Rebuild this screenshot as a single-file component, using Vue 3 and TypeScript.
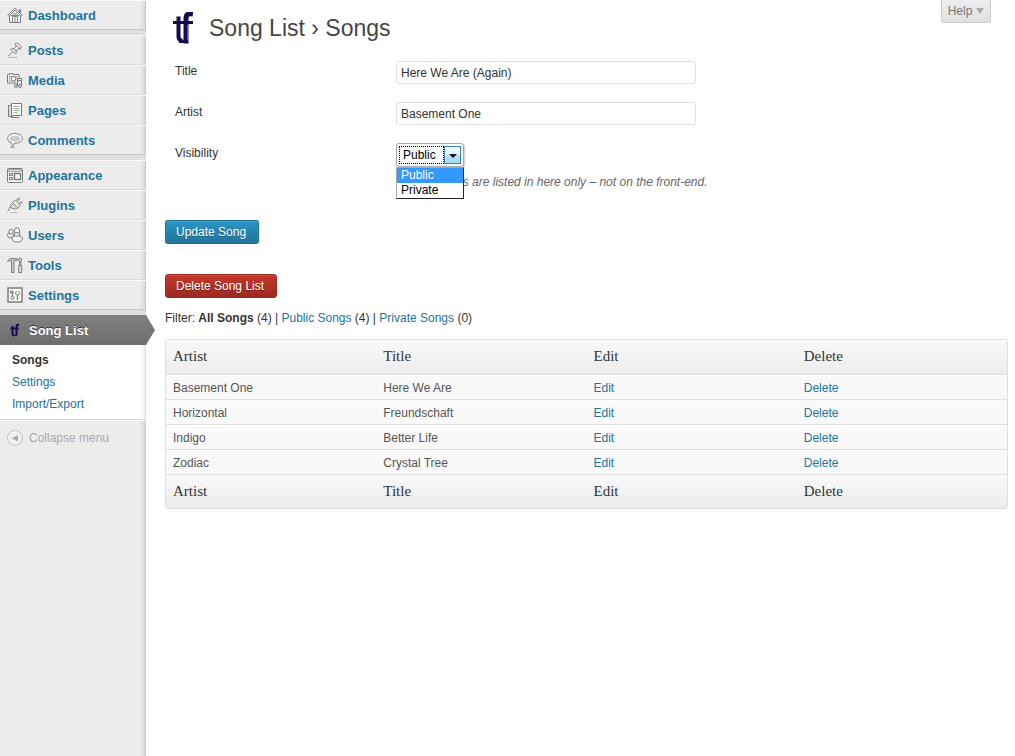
<script setup lang="ts">
import { ref } from 'vue'

interface MenuItem { name: string; icon: string }
interface Song { artist: string; title: string }

const menuGroups: MenuItem[][] = [
  [{ name: 'Dashboard', icon: 'home' }],
  [
    { name: 'Posts', icon: 'pin' },
    { name: 'Media', icon: 'media' },
    { name: 'Pages', icon: 'pages' },
    { name: 'Comments', icon: 'comment' },
  ],
  [
    { name: 'Appearance', icon: 'appearance' },
    { name: 'Plugins', icon: 'plug' },
    { name: 'Users', icon: 'users' },
    { name: 'Tools', icon: 'tools' },
    { name: 'Settings', icon: 'settings' },
  ],
]

const columns: string[] = ['Artist', 'Title', 'Edit', 'Delete']
const songs: Song[] = [
  { artist: 'Basement One', title: 'Here We Are' },
  { artist: 'Horizontal', title: 'Freundschaft' },
  { artist: 'Indigo', title: 'Better Life' },
  { artist: 'Zodiac', title: 'Crystal Tree' },
]
const options: string[] = ['Public', 'Private']

const title = ref('Here We Are (Again)')
const artist = ref('Basement One')
const visibility = ref('Public')
const menuOpen = ref(true)

function choose(option: string): void {
  visibility.value = option
  menuOpen.value = false
}
</script>

<template>
  <div class="page">
    <nav class="sidebar">
      <ul v-for="(group, g) in menuGroups" :key="g" class="group">
        <li v-for="item in group" :key="item.name" class="item">
          <a href="#" class="item-link">
            <svg class="icon" viewBox="0 0 16 16" fill="none" stroke="#7c7c7c" stroke-width="1" aria-hidden="true">
              <g v-if="item.icon === 'home'">
                <path d="M2.500 8v7.500h11V8" fill="#f6f6f6" />
                <path d="M.8 8.200 8 1.200l7.200 7-1 1L8 3.200 1.800 9.200z" fill="#fff" />
                <path d="M12.500 5V2.500h1V6M5.500 15V9.500h5V15M8 10v5M4 8.500h8M6 7h4" stroke="#888" />
              </g>
              <g v-else-if="item.icon === 'pin'">
                <path d="M8.500 1.500c1-1 2.500-.3 4 1.200s2 3 1 4c-1 .6-1.700.3-2.300-.1L9 9c.4 1.500.2 2.300-.5 3L3.800 7.300c1-.8 2-.9 3.200-.4l2-2.300c-.7-1-1-2.200-.5-3.100z" fill="#f5f5f5" />
                <path d="M5.500 10 1 14.500M9.500 3c.8 1.800 1.800 2.900 3.500 3.500M7 7l2 2" />
                <path d="M2 15.500h9" stroke="#bbb" />
              </g>
              <g v-else-if="item.icon === 'media'">
                <path d="M.5 2.500h2v-1h3v1h6.500v8.500H.5z" fill="#f4f4f4" />
                <rect x="2.500" y="4.500" width="7.500" height="4.500" stroke="#aaa" />
                <circle cx="6.500" cy="6.700" r="2.300" fill="#fff" />
                <path d="M9.500 14V6.500h5V13" fill="#eee" stroke="none" />
                <path d="M10.500 14V6.500h4V13M10.500 8.500h4" />
                <circle cx="8.800" cy="14" r="1.500" fill="#ddd" /><circle cx="13" cy="14" r="1.500" fill="#ddd" />
              </g>
              <g v-else-if="item.icon === 'pages'">
                <path d="M1.500 3.500h4v11h-4zM4 15.500h8" fill="#ddd" />
                <path d="M4.500 1.500h10v12h-10z" fill="#f8f8f8" />
                <path d="M6.500 4.500h6M6.500 6.500h6M6.500 8.500h6M6.500 10.500h4" stroke="#aaa" />
              </g>
              <g v-else-if="item.icon === 'comment'">
                <path d="M4.500 10.800C2 10 .7 8.800.7 6.500c0-3 3.300-5 7.300-5s7.300 2 7.300 5-3.300 4.800-7.800 4.700c-.4 1.800-1 3-2.800 3.800.7-1.500.7-2.800-.2-4.200z" fill="#fbfbfb" />
                <path d="M2.700 7c0-2 2.300-3.300 5.300-3.300S13.300 5 13.300 7 11 9.500 8 9.500 2.700 9 2.700 7z" fill="#ccc" stroke="none" />
                <path d="M3 15.500h5" stroke="#aaa" />
              </g>
              <g v-else-if="item.icon === 'appearance'">
                <rect x=".5" y="1.500" width="15" height="14" rx="1" fill="#fafafa" />
                <path d="M1.500 2.500h13v2h-13z" fill="#ddd" stroke="#aaa" />
                <rect x="2.500" y="6.500" width="3" height="2" /><rect x="2.500" y="10.500" width="3" height="2" />
                <rect x="7.500" y="6.500" width="6" height="6" stroke-width="1.500" />
              </g>
              <g v-else-if="item.icon === 'plug'">
                <path d="M5.500 5.500C7 3 9 3.500 11 5.500s2.200 4 0 5.500c-2 1.200-4.500 1.500-6.500 0-1.500-1.700-.6-3.700 1-5.500z" fill="#f5f5f5" />
                <path d="M5.500 5.500 11 11M8.500 4l3.500-3 .8.800-3.300 3.200M11.500 7l3-2.500.8.800-3 2.700" fill="#fff" />
                <path d="M4.500 10c-2 .2-2.800 1-2.200 2.500L.5 14.500" />
                <path d="M6 7v3M8 9v2" stroke="#aaa" /><path d="M3 15.500h7" stroke="#bbb" />
              </g>
              <g v-else-if="item.icon === 'users'">
                <ellipse cx="3.500" cy="8.200" rx="3" ry="2.700" fill="#eee" />
                <ellipse cx="4" cy="4.700" rx="2" ry="2.500" fill="#fff" />
                <ellipse cx="10" cy="4" rx="2.600" ry="3.200" fill="#fff" />
                <ellipse cx="10" cy="8" rx="3" ry="2.500" fill="#eee" />
                <path d="M5 11.500C5 9.500 7 9 8.500 9h3.500c2 0 3.500 1.300 3.500 3s-2 3-5 3-5.500-1-5.500-3.500z" fill="#f7f7f7" />
              </g>
              <g v-else-if="item.icon === 'tools'">
                <path d="M.7 4.500C1.500 2.300 3 1.500 5 1.500h3.500v2H7v12H4.500v-12c-1.500-.3-2.500.2-3.800 1z" fill="#ccc" />
                <path d="M8.500 1.500h1.800v2H8.500" fill="#ddd" />
                <path d="M12.500 8V4l-.8-1 1-2h1l1 2-.8 1v4M11.700 8.500h3v7h-3z" fill="#ddd" />
              </g>
              <g v-else>
                <rect x="1" y="1" width="14" height="14" fill="#fafafa" stroke-width="1.500" />
                <path d="M5.500 3.500v6M3.500 3.500v2h3M10.500 8v5" stroke-width="1.300" />
                <circle cx="5.500" cy="11" r="1.500" /><circle cx="10.500" cy="6" r="2" /><path d="M10.500 3v2" stroke="#fafafa" stroke-width="1.500" />
              </g>
            </svg>
            <span>{{ item.name }}</span>
          </a>
        </li>
      </ul>

      <a href="#" class="current">
        <svg class="icon" viewBox="0 0 16 16" fill="none" stroke="#16094f" aria-hidden="true">
          <path d="M5.500 4v7.500q0 2 2 2M3.500 6.500h8M12 3q-2.500-1-2.500 1.500v9" stroke-width="2" />
          <path d="M7.500 13.500h2" />
        </svg>
        <span>Song List</span>
      </a>
      <ul class="submenu">
        <li><a href="#" class="selected">Songs</a></li>
        <li><a href="#">Settings</a></li>
        <li><a href="#">Import/Export</a></li>
      </ul>
      <button type="button" class="collapse">
        <svg class="icon" viewBox="0 0 16 16" aria-hidden="true">
          <circle cx="8" cy="8" r="7.500" fill="#f1f1f1" stroke="#c4c4c4" />
          <path d="M11 5v6.500L4.500 8.200z" fill="#aaa" />
        </svg>
        <span>Collapse menu</span>
      </button>
    </nav>

    <main class="content">
      <header class="heading">
        <svg class="logo" viewBox="0 0 20 32" fill="none" stroke="#16094f" aria-hidden="true">
          <path d="M5.500 4.500v20q0 4 4 4.500" stroke-width="4" />
          <path d="M0 10.500h20" stroke-width="3" />
          <path d="M20 2q-7-1.500-7 4.500v25" stroke-width="5" />
          <path d="M6 29.500h9" stroke-width="3" />
          <path d="M14.500 13v15" stroke="#5f5797" stroke-width="1" />
        </svg>
        <h1>Song List › Songs</h1>
        <button type="button" class="help">Help <span class="caret"></span></button>
      </header>

      <form @submit.prevent>
        <div class="fields">
          <label for="title">Title</label>
          <input id="title" v-model="title" type="text">
          <label for="artist">Artist</label>
          <input id="artist" v-model="artist" type="text">
          <label for="visibility">Visibility</label>
          <div class="visibility">
            <div class="picker">
              <select id="visibility" v-model="visibility">
                <option v-for="option in options" :key="option">{{ option }}</option>
              </select>
              <span class="focus-ring"></span>
              <span class="drop"></span>
              <ul v-if="menuOpen" class="options" role="listbox" aria-label="Visibility">
                <li
                  v-for="option in options"
                  :key="option"
                  role="option"
                  :aria-selected="option === visibility"
                  :class="{ active: option === visibility }"
                  @click="choose(option)"
                >{{ option }}</li>
              </ul>
            </div>
            <p class="hint">Private songs are listed in here only – not on the front-end.</p>
          </div>
        </div>
        <button type="submit" class="button">Update Song</button>
      </form>
      <button type="button" class="button danger">Delete Song List</button>

      <p class="filter">
        Filter: <strong>All Songs</strong> (4) | <a href="#">Public Songs</a> (4) | <a href="#">Private Songs</a> (0)
      </p>

      <table>
        <thead>
          <tr><th v-for="column in columns" :key="column" scope="col">{{ column }}</th></tr>
        </thead>
        <tbody>
          <tr v-for="song in songs" :key="song.artist">
            <td>{{ song.artist }}</td>
            <td>{{ song.title }}</td>
            <td><a href="#">Edit</a></td>
            <td><a href="#">Delete</a></td>
          </tr>
        </tbody>
        <tfoot>
          <tr><th v-for="column in columns" :key="column" scope="col">{{ column }}</th></tr>
        </tfoot>
      </table>
    </main>
  </div>
</template>

<style>
body {
  margin: 0;
  background: #fff;
}
</style>

<style scoped>
* {
  box-sizing: border-box;
}

.page {
  display: flex;
  min-height: 100vh;
  font: 12px/16px "Liberation Sans", Arial, sans-serif;
  color: #333;
}

ul,
p,
h1 {
  margin: 0;
  padding: 0;
  list-style: none;
}

a {
  color: #21759b;
  text-decoration: none;
}

button,
input,
select {
  font: inherit;
}

.sidebar {
  flex: none;
  width: 146px;
  background: linear-gradient(to left, #c8c8c8, #dedede 2px, #ececec 7px);
}

.group {
  border-bottom: 5px solid #dfdfdf;
}

.item {
  height: 30px;
  border-top: 1px solid #f9f9f9;
  border-bottom: 1px solid #dadada;
}

.item:last-child {
  border-bottom-color: #c6c6c6;
}

.item-link,
.current {
  display: flex;
  align-items: center;
  gap: 5px;
  height: 28px;
  padding-left: 7px;
  font-size: 13px;
  font-weight: bold;
}

.item-link span,
.current span {
  padding-top: 2px;
}

.icon {
  flex: none;
  width: 16px;
  height: 16px;
}

.current {
  position: relative;
  height: 30px;
  gap: 6px;
  background: linear-gradient(#808080, #6d6d6d);
  color: #fff;
  text-shadow: 0 -1px 0 #333;
}

.current::after {
  content: "";
  position: absolute;
  top: 0;
  left: 100%;
  width: 9px;
  height: 30px;
  background: linear-gradient(#808080, #6d6d6d);
  clip-path: polygon(0 0, 100% 50%, 0 100%);
}

.submenu {
  height: 75px;
  padding: 4px 0 4px 12px;
  border-bottom: 1px solid #dadada;
  background: linear-gradient(to left, #d8d8d8, #f4f4f4 2px, #fff 7px);
}

.submenu li {
  height: 22px;
  line-height: 22px;
}

.submenu .selected {
  color: #333;
  font-weight: bold;
}

.collapse {
  display: flex;
  align-items: center;
  gap: 6px;
  width: 100%;
  height: 35px;
  padding: 0 0 0 7px;
  border: 0;
  border-top: 1px solid #f9f9f9;
  background: none;
  color: #aaa;
}

.content {
  flex: 1;
  min-width: 0;
  padding: 0 7px 20px 19px;
}

.heading {
  display: flex;
  align-items: flex-start;
  padding: 0 17px 0 8px;
  height: 61px;
}

.logo {
  width: 20px;
  height: 32px;
  margin-top: 12px;
}

h1 {
  margin: 14px auto 0 16px;
  font-size: 23px;
  line-height: 28px;
  font-weight: normal;
  color: #464646;
}

.help {
  display: flex;
  align-items: center;
  justify-content: center;
  gap: 4px;
  width: 50px;
  height: 23px;
  padding: 0;
  border: 1px solid #ccc;
  border-top: 0;
  border-radius: 0 0 3px 3px;
  background: linear-gradient(#eee, #e0e0e0);
  color: #777;
}

.caret {
  border: 4px solid transparent;
  border-top: 6px solid #aaa;
  border-bottom: 0;
}

.fields {
  display: grid;
  grid-template-columns: 221px minmax(0, 1fr);
  row-gap: 18px;
  padding-left: 10px;
}

.fields label {
  padding-top: 2px;
}

.fields input {
  width: 300px;
  height: 23px;
  padding: 0 4px;
  border: 1px solid #dfdfdf;
  border-radius: 3px;
  background: #fff;
  color: #333;
}

.visibility {
  height: 59px;
}

.picker {
  position: relative;
  width: 68px;
  height: 24px;
}

select {
  appearance: none;
  width: 68px;
  height: 24px;
  padding: 0 20px 0 6px;
  border: 1px solid #aaa;
  border-radius: 3px;
  background: #fff;
  box-shadow: 1px 1px 2px #ccc;
  color: #000;
}

.focus-ring {
  position: absolute;
  inset: 3px 20px 3px 3px;
  border: 1px dotted #000;
  pointer-events: none;
}

.drop {
  position: absolute;
  inset: 3px 3px 3px auto;
  display: flex;
  align-items: center;
  justify-content: center;
  width: 17px;
  border: 1px solid #3c7fb1;
  background: linear-gradient(#e8f6fd 50%, #b5e1f8 50%, #a5daf7);
  pointer-events: none;
}

.drop::after {
  content: "";
  margin-top: 2px;
  border: 4px solid transparent;
  border-top-color: #111;
  border-bottom: 0;
}

.options {
  position: absolute;
  top: 24px;
  left: 0;
  width: 68px;
  border: 1px solid #222;
  border-top-color: #aaa;
  border-left-color: #aaa;
  background: #fff;
  color: #000;
  line-height: 15px;
}

.options li {
  padding-left: 4px;
}

.options .active {
  background: #39f;
  color: #fff;
}

.hint {
  margin-top: 7px;
  font-style: italic;
  color: #666;
}

.button {
  display: block;
  height: 24px;
  margin-top: 18px;
  padding: 0 12px 0 10px;
  border: 1px solid #21759b;
  border-radius: 3px;
  border-bottom-color: #1e6a8d;
  background: linear-gradient(#2a95c5, #21759b);
  box-shadow: inset 0 1px 0 #3fa3cf;
  color: #fff;
  text-shadow: 0 1px 0 #1f5f7d;
}

.danger {
  margin-top: 30px;
  border-color: #9b2a21;
  background: linear-gradient(#c5382a, #9b2921);
  box-shadow: inset 0 1px 0 #cf4f3f;
  text-shadow: 0 1px 0 #7a211a;
}

.filter {
  margin: 12px 0 13px;
}

table {
  width: 100%;
  table-layout: fixed;
  border: 1px solid #dfdfdf;
  border-radius: 3px;
  border-spacing: 0;
  background: #f9f9f9;
  color: #555;
}

th {
  height: 35px;
  padding: 0 7px 2px;
  font: 15px/18px "Liberation Serif", "Times New Roman", serif;
  color: #333;
  text-align: left;
}

thead tr,
tfoot tr {
  background: linear-gradient(#f9f9f9, #ececec);
}

thead th {
  border-bottom: 1px solid #dfdfdf;
}

tfoot th {
  height: 33px;
}

td {
  height: 25px;
  padding: 0 7px;
  border-top: 1px solid #fff;
  border-bottom: 1px solid #dfdfdf;
}
</style>
